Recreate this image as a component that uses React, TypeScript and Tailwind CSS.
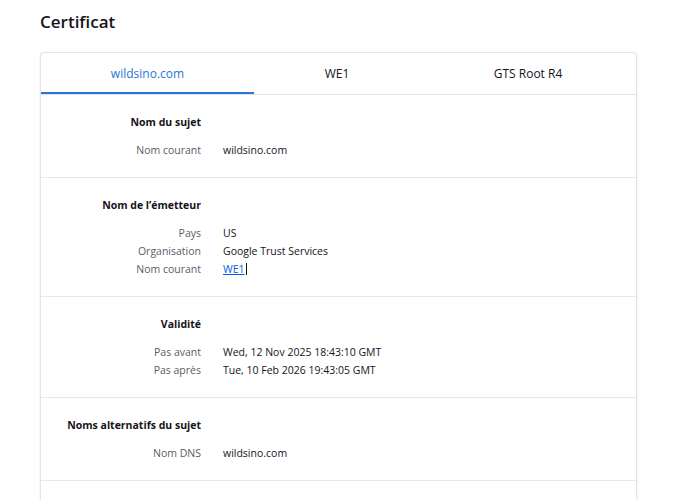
const font = { fontFamily: '"Open Sans", "Noto Sans", sans-serif' };

type Row = { label: string; value: string; link?: boolean };
type Section = { title: string; rows: Row[] };

const sections: Section[] = [
  { title: 'Nom du sujet', rows: [{ label: 'Nom courant', value: 'wildsino.com' }] },
  {
    title: 'Nom de l’émetteur',
    rows: [
      { label: 'Pays', value: 'US' },
      { label: 'Organisation', value: 'Google Trust Services' },
      { label: 'Nom courant', value: 'WE1', link: true },
    ],
  },
  {
    title: 'Validité',
    rows: [
      { label: 'Pas avant', value: 'Wed, 12 Nov 2025 18:43:10 GMT' },
      { label: 'Pas après', value: 'Tue, 10 Feb 2026 19:43:05 GMT' },
    ],
  },
  { title: 'Noms alternatifs du sujet', rows: [{ label: 'Nom DNS', value: 'wildsino.com' }] },
];

function CertSection({ section }: { section: Section }) {
  return (
    <div className="border-b border-[#e8e8ec] pt-[18px] pb-[18px]">
      <div className="grid grid-cols-[160px_1fr] gap-x-[22px]">
        <div className="text-right text-[10.5px] leading-[18px] font-bold text-[#15141a] mb-[10px]">
          {section.title}
        </div>
        <div />
        {section.rows.map((row, i) => (
          <div key={i} className="contents">
            <div className="text-right text-[10.5px] leading-[18px] text-[#5b5b66]">{row.label}</div>
            <div className="text-[10.5px] leading-[18px] text-[#15141a]">
              {row.link ? (
                <span className="inline-flex items-center">
                  <span className="text-[#0060df] underline">{row.value}</span>
                  <span className="ml-px inline-block w-px h-[12px] bg-[#15141a]" />
                </span>
              ) : (
                row.value
              )}
            </div>
          </div>
        ))}
      </div>
    </div>
  );
}

export default function App() {
  const tabs = [
    { name: 'wildsino.com', width: 'w-[213px]' },
    { name: 'WE1', width: 'w-[166px]' },
    { name: 'GTS Root R4', width: 'flex-1' },
  ];

  return (
    <div className="min-h-[500px] bg-white pl-[40px] pr-[45px] pt-[10px]" style={font}>
      <h1 className="text-[17px] leading-[24px] font-semibold text-[#15141a] mb-[18px]">Certificat</h1>

      <div className="rounded-[4px] border border-[#e3e3e8] shadow-[0_1px_3px_rgba(0,0,0,0.08)] bg-white">
        <div className="flex border-b border-[#e3e3e8]">
          {tabs.map((tab, i) => (
            <div
              key={tab.name}
              className={`${tab.width} h-[41px] flex items-center justify-center text-[12px] ${
                i === 0 ? 'text-[#2a74d4] border-b-2 border-[#2a74d4] pt-[2px]' : 'text-[#15141a]'
              }`}
            >
              {tab.name}
            </div>
          ))}
        </div>

        {sections.map((s) => (
          <CertSection key={s.title} section={s} />
        ))}
        <div className="h-[40px]" />
      </div>
    </div>
  );
}
